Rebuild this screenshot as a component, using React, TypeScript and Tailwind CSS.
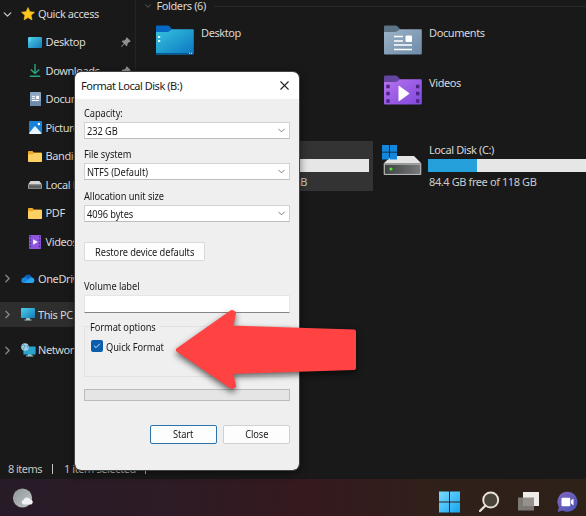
import type { ReactNode } from "react";
import clsx from "clsx";
import { Check, ChevronDown, ChevronRight, X } from "lucide-react";

/* ---------- small icons ---------- */

function StarIcon() {
  return (
    <svg width="14" height="14" viewBox="0 0 14 14">
      <path d="M7 .5l1.9 4.2 4.6.5-3.4 3.1.9 4.6L7 10.6l-4 2.3.9-4.6L.5 5.2l4.6-.5z" fill="#ffc61c" stroke="#ffc61c" strokeWidth=".6" strokeLinejoin="round" />
    </svg>
  );
}

function DesktopIcon() {
  return (
    <svg width="14" height="11" viewBox="0 0 14 11">
      <defs>
        <linearGradient id="desk" x1="0" y1="0" x2="1" y2="1">
          <stop offset="0" stopColor="#4fd0ea" />
          <stop offset="1" stopColor="#1479b8" />
        </linearGradient>
      </defs>
      <rect width="14" height="11" rx=".8" fill="url(#desk)" />
      <path d="M1.5 2h1M1.5 4h1" stroke="#c9f3fb" strokeWidth=".8" />
    </svg>
  );
}

function DownloadIcon() {
  return (
    <svg width="12" height="13" viewBox="0 0 12 13" fill="none" stroke="#27a57b" strokeWidth="1.4">
      <path d="M6 0v9.5M1.8 5.6L6 9.6l4.2-4M.8 12.2h10.4" />
    </svg>
  );
}

function DocumentIcon() {
  return (
    <svg width="11" height="14" viewBox="0 0 11 14">
      <rect width="11" height="14" rx=".8" fill="#8ba6c1" />
      <path d="M0 9h11v4.2a.8.8 0 0 1-.8.8H.8a.8.8 0 0 1-.8-.8z" fill="#6e8aaa" />
      <path d="M2 4.4h3M2 6.4h3M2 8.6h7" stroke="#fff" strokeWidth="1" />
      <rect x="6.2" y="3.8" width="2.8" height="3.2" fill="#fff" />
    </svg>
  );
}

function PictureIcon() {
  return (
    <svg width="13" height="13" viewBox="0 0 13 13">
      <rect width="13" height="13" rx="1" fill="#1683d8" />
      <path d="M0 12.2L5.500 5.600a.7.7 0 0 1 1 0l6 6.600c-.2.5-.4.8-1 .8H1c-.5 0-.8-.3-1-.8z" fill="#e9f5fd" />
      <circle cx="9.900" cy="3" r="1.200" fill="#fff" />
    </svg>
  );
}

function FolderIcon() {
  return (
    <svg width="14" height="11" viewBox="0 0 14 11">
      <path d="M0 1a.9.9 0 0 1 .9-1h3.600l1.400 1.500h7.200a.9.9 0 0 1 .9.9V5H0z" fill="#eda927" />
      <path d="M0 3.200h4.800l1.300-1.100h7a.9.9 0 0 1 .9.9v7.100a.9.9 0 0 1-.9.9H.9a.9.9 0 0 1-.9-.9z" fill="#fdd063" />
    </svg>
  );
}

function DiskIcon() {
  return (
    <svg width="14" height="8" viewBox="0 0 14 8">
      <path d="M2.600 0h8.800L14 3.600H0z" fill="#d5d5d5" />
      <rect y="3.400" width="14" height="4.400" rx=".5" fill="#a2a2a2" />
      <rect x=".9" y="4.300" width="12.200" height="2.600" fill="#595b5b" />
    </svg>
  );
}

function VideoIcon() {
  return (
    <svg width="12" height="14" viewBox="0 0 12 14">
      <rect width="12" height="14" rx=".8" fill="#8e56db" />
      <path d="M1.400 1v12M10.600 1v12" stroke="#4c2a9b" strokeWidth="1.400" strokeDasharray="1.6 1.6" />
      <path d="M4.200 4.200v5.600L8.800 7z" fill="#fff" />
    </svg>
  );
}

function OneDriveIcon() {
  return (
    <svg width="14" height="9" viewBox="0 0 14 9">
      <path d="M3 4A4 4 0 0 1 10.400 2.600L12 5.500 5 7z" fill="#0b62b9" />
      <path d="M2.800 9A2.800 2.800 0 0 1 3.300 3.400 3.600 3.600 0 0 1 6 4l5 4.600z" fill="#1685dc" />
      <path d="M3 9l5-4.300a3.400 3.400 0 0 1 3-1.200A2.800 2.800 0 0 1 11.300 9z" fill="#2aa4ee" />
    </svg>
  );
}

function PcIcon() {
  return (
    <svg width="14" height="13" viewBox="0 0 14 13">
      <path d="M5.500 9h3l.5 2.600H5zM3.500 11.400h7v1h-7z" fill="#9fc4d4" />
      <rect width="14" height="10" rx=".8" fill="url(#desk)" />
    </svg>
  );
}

function NetworkIcon() {
  return (
    <svg width="15" height="14" viewBox="0 0 15 14" className="shrink-0">
      <path d="M7 11h3.400l.4 2H6.600zM5 12.600h7.400v1H5z" fill="#9fc4d4" />
      <rect x="2.400" y="3.600" width="12.200" height="8" rx=".7" fill="#2ba3cf" />
      <circle cx="4" cy="4" r="3.800" fill="#a5d3e6" />
      <path d="M1.200 2.600l1.800-.8 1.200 1.200L3 4.400 2.600 6.600M5.800 2l1 1.600-1 1.600" fill="none" stroke="#3d8cb4" strokeWidth=".9" />
    </svg>
  );
}

function PinIcon() {
  return (
    <svg width="10" height="10" viewBox="0 0 10 10">
      <path d="M5.800.2l4 4-1 .8-.6-.1-1.600 1.700-.2 1.900-.9.7-2.100-2.100L.7 9.900.1 9.300l2.800-2.700L.8 4.500l.7-.9 1.900-.2L5.100 1.800 5 1.200z" fill="#8f9193" />
    </svg>
  );
}

/* ---------- large icons ---------- */

function BigFolder({ kind }: { kind: "desktop" | "documents" | "videos" }) {
  const fills = {
    desktop: ["#0569c4", "#36c3e0", "#0c76c0"],
    documents: ["#5c7486", "#9db4c9", "#6d8aa6"],
    videos: ["#65449f", "#b671ee", "#8048dc"],
  }[kind];
  return (
    <svg width="38" height="30" viewBox="0 0 38 30" className="shrink-0">
      <defs>
        <linearGradient id={kind} x1="0" y1="0" x2="1" y2="1">
          <stop offset="0" stopColor={fills[1]} />
          <stop offset="1" stopColor={fills[2]} />
        </linearGradient>
      </defs>
      <path d="M0 1.500Q0 .5 1 .5h10.500q1 0 1.800.7L16.500 4.500V12H0z" fill={fills[0]} />
      <path d="M0 7h11.500q1 0 1.800-.7L15 5q.8-.7 1.800-.7H36.800q1 0 1 1V28.500q0 1-1 1H1q-1 0-1-1z" fill={`url(#${kind})`} />
      {kind === "desktop" && (
        <>
          <path d="M0 28h37.800v.5q0 1-1 1H1q-1 0-1-1z" fill="#075a96" />
          <path d="M2 12h2.200M2 16h2.200" stroke="#e2fbff" strokeWidth="2" />
          <path d="M33 28.300h1.200M35 28.300h1.200" stroke="#d5f2fa" strokeWidth="1" />
        </>
      )}
      {kind === "documents" && (
        <>
          <path d="M10 11.500h9M10 16h9M10 20h18M10 24.500h18" stroke="#fff" strokeWidth="1.500" />
          <rect x="21.500" y="10.500" width="6.500" height="6.500" rx="1" fill="#fff" />
        </>
      )}
      {kind === "videos" && (
        <>
          <path d="M2.300 11.500h3.400M2.300 18.500h3.400M2.300 26h3.400M32 11.500h3.400M32 18.500h3.400M32 26h3.400" stroke="#4b2585" strokeWidth="3.600" />
          <path d="M14.500 11.500q0-1 .9-.5l9.600 7q.7.500 0 1l-9.600 7q-.9.500-.9-.500z" fill="#fff" />
        </>
      )}
    </svg>
  );
}

function SystemDriveIcon() {
  return (
    <svg width="40" height="32" viewBox="0 0 40 32">
      <defs>
        <linearGradient id="drive" x1="0" y1="0" x2="1" y2="0">
          <stop offset="0" stopColor="#3d4242" />
          <stop offset="1" stopColor="#77797a" />
        </linearGradient>
      </defs>
      <path d="M9.500 12h22.500l7.500 7.500H1.500z" fill="#e4e4e4" />
      <rect x="1.700" y="19.500" width="37.600" height="11.500" rx=".8" fill="#b4b5b5" />
      <rect x="2.900" y="20.700" width="35.200" height="9.200" fill="url(#drive)" />
      <circle cx="9" cy="25" r="1.600" fill="#4ee62d" />
      <path d="M0 1h7.100v6.800H0zM7.900 1H15v6.800H7.900zM0 8.600h7.100v6.800H0zM7.900 8.600H15v6.800H7.900z" fill="#1387dc" />
    </svg>
  );
}

/* ---------- explorer ---------- */

function NavItem({ icon, label, pinned }: { icon: ReactNode; label: string; pinned?: boolean }) {
  return (
    <div className="flex h-[28.5px] items-center pl-7">
      <span className="flex w-[14px] shrink-0 justify-center">{icon}</span>
      <span className="ml-[3.5px] flex-1">{label}</span>
      {pinned && <span className="mr-1"><PinIcon /></span>}
    </div>
  );
}

function RootItem({ icon, label, active }: { icon: ReactNode; label: string; active?: boolean }) {
  return (
    <div className={clsx("flex h-[25.5px] items-center", active && "bg-[#2e2e2e]")}>
      <ChevronRight className="ml-[1px] size-[13px] shrink-0 text-[#858585]" strokeWidth={2.5} />
      <span className="ml-[7px] flex w-[14px] shrink-0 justify-center">{icon}</span>
      <span className="ml-[3px]">{label}</span>
    </div>
  );
}

function Sidebar() {
  return (
    <nav className="w-[136px] shrink-0 overflow-hidden border-r border-[#242424]">
      <div className="flex h-[28px] items-center">
        <ChevronDown className="ml-[1px] size-[13px] text-[#c4c4c4]" strokeWidth={2.5} />
        <span className="ml-[7px]"><StarIcon /></span>
        <span className="ml-[3px]">Quick access</span>
      </div>
      <NavItem icon={<DesktopIcon />} label="Desktop" pinned />
      <NavItem icon={<DownloadIcon />} label="Downloads" pinned />
      <NavItem icon={<DocumentIcon />} label="Documents" />
      <NavItem icon={<PictureIcon />} label="Pictures" />
      <NavItem icon={<FolderIcon />} label="Bandicam" />
      <NavItem icon={<DiskIcon />} label="Local Disk" />
      <NavItem icon={<FolderIcon />} label="PDF" />
      <NavItem icon={<VideoIcon />} label="Videos" />
      <div className="flex flex-col gap-[10.3px] pt-[10px]">
        <RootItem icon={<OneDriveIcon />} label="OneDrive" />
        <RootItem icon={<PcIcon />} label="This PC" active />
        <RootItem icon={<NetworkIcon />} label="Network" />
      </div>
    </nav>
  );
}

function FolderTile({ kind, label }: { kind: "desktop" | "documents" | "videos"; label: string }) {
  return (
    <div className="flex h-[50px] pt-[10px]">
      <BigFolder kind={kind} />
      <span className="ml-[7px]">{label}</span>
    </div>
  );
}

function Content() {
  return (
    <main className="min-w-0 flex-1">
      <div className="flex h-[15px] items-center pb-[3px] pl-[7px] leading-[12px]">
        <ChevronDown className="size-[10px] text-[#6d6d6d]" strokeWidth={2} />
        <span className="ml-[3.5px] pr-px">Folders (6)</span>
        <span className="ml-[7px] h-px flex-1 bg-[#292a2c]" />
      </div>
      <div className="grid grid-cols-[228px_228px] pl-5">
        <FolderTile kind="desktop" label="Desktop" />
        <FolderTile kind="documents" label="Documents" />
        <div />
        <FolderTile kind="videos" label="Videos" />
      </div>
      <div className="mt-[26px] flex h-[50px]">
        <div className="flex w-[237px] flex-col bg-[#333333] pr-1 pt-[18px]">
          <div className="h-[13px] bg-[#e6e6e6]" />
          <span className="mt-[2px] pr-[62px] text-right text-[#c8c8c8]">931 GB free of 932 GB</span>
        </div>
        <div className="ml-[9px] mt-[3px]"><SystemDriveIcon /></div>
        <div className="ml-[6px] flex-1">
          <div className="flex h-[18px] items-center pl-[1px]">Local Disk (C:)</div>
          <div className="h-[13px] bg-[#e6e6e6]">
            <div className="h-full w-[49px] bg-[#26a0da]" />
          </div>
          <div className="mt-[2px] pl-[1px] text-[#cccccc]">84.4 GB free of 118 GB</div>
        </div>
      </div>
    </main>
  );
}

/* ---------- dialog ---------- */

/* Condensed dialog lettering */
function Label({ children, center }: { children: ReactNode; center?: boolean }) {
  return (
    <span className={clsx("inline-block scale-x-[0.845]", center ? "origin-center" : "origin-left")}>
      {children}
    </span>
  );
}

function SelectField({ label, value }: { label: string; value: string }) {
  return (
    <div className="h-[41.3px]">
      <div className="h-[17px]"><Label>{label}</Label></div>
      <div className="flex h-[17px] items-center justify-between border border-[#d2d2d2] border-b-[#bdbdbd] bg-white pl-[2px] pr-[2px]">
        <Label>{value}</Label>
        <ChevronDown className="size-[11px] text-[#666]" strokeWidth={1.8} />
      </div>
    </div>
  );
}

function FormatDialog() {
  return (
    <div className="absolute left-[75px] top-[72px] flex h-[398px] w-[224px] flex-col overflow-hidden rounded-[6px] bg-[#efefef] text-[11px] leading-[15px] tracking-[-0.1px] text-[#1b1b1b] shadow-[0_2px_10px_rgba(0,0,0,0.6)] outline outline-[#444]">
      <div className="flex h-[27px] shrink-0 items-center justify-between bg-white pl-[6px] pr-[7px]">
        <span className="tracking-[-0.47px]">Format Local Disk (B:)</span>
        <X className="size-[15px] text-[#222]" strokeWidth={1.7} />
      </div>
      <div className="flex flex-1 flex-col px-[9px] pt-[6px]">
        <SelectField label="Capacity:" value="232 GB" />
        <SelectField label="File system" value="NTFS (Default)" />
        <SelectField label="Allocation unit size" value="4096 bytes" />
        <button className="mt-[13px] flex h-[19px] w-[121px] shrink-0 items-center justify-center rounded-[1px] border border-[#dadada] bg-[#fdfdfd]">
          <Label center>Restore device defaults</Label>
        </button>
        <div className="mt-[17px]"><Label>Volume label</Label></div>
        <div className="mt-[2px] h-[18px] shrink-0 border border-[#e6e6e6] border-b-[#868686] bg-white" />
        <fieldset className="mt-[6px] h-[58px] shrink-0 border border-[#e2e2e2] px-[6px]">
          <legend className="-ml-[1.5px] w-[70px]"><Label>Format options</Label></legend>
          <div className="mt-[5px] flex items-center">
            <span className="flex size-[12px] items-center justify-center rounded-[2px] bg-[#0a5cad]">
              <Check className="size-[8px] text-white" strokeWidth={2.5} />
            </span>
            <span className="ml-[2.5px]"><Label>Quick Format</Label></span>
          </div>
        </fieldset>
        <div className="mt-[12px] h-[12px] shrink-0 border border-[#bcbcbc] bg-[#e5e5e5]" />
        <div className="mt-[24px] flex justify-end gap-[6px]">
          <button className="h-[19px] w-[67px] rounded-[2px] border border-[#2a73ad] bg-[#fdfdfd] leading-[16px]"><Label center>Start</Label></button>
          <button className="h-[19px] w-[67px] rounded-[2px] border border-[#d0d0d0] bg-[#fdfdfd] leading-[16px]"><Label center>Close</Label></button>
        </div>
      </div>
    </div>
  );
}

/* Callout arrow pointing at the Quick Format box */
function Arrow() {
  return (
    <svg width="200" height="100" viewBox="0 0 200 100" className="absolute left-[166px] top-[300px] drop-shadow-[0_3px_3px_rgba(0,0,0,0.6)]">
      <path d="M12 50L66 12l2 1-3 14.500L188 31.500v36.500L65 72l3 14-2 1z" fill="#ff4242" stroke="#ff4242" strokeWidth="4" strokeLinejoin="round" />
    </svg>
  );
}

/* ---------- taskbar ---------- */

function Taskbar() {
  return (
    <footer className="flex h-[37px] shrink-0 items-center bg-[linear-gradient(90deg,#271b28_0%,#2d1b25_28%,#35191e_52%,#30201a_75%,#2d2118_100%)] pt-[8px]">
      <svg width="22" height="22" viewBox="0 0 22 22" className="-mt-[8px] ml-[12px]">
        <defs>
          <linearGradient id="moon" x1="0" y1="0" x2="1" y2="1">
            <stop offset="0" stopColor="#8d9597" />
            <stop offset="1" stopColor="#c2c7c9" />
          </linearGradient>
        </defs>
        <circle cx="10.500" cy="11" r="9.600" fill="url(#moon)" />
        <path d="M11.500 17.500a2.300 2.300 0 0 1 0-4.500 3.700 3.700 0 0 1 6.700-.5 2.600 2.600 0 0 1 1 5z" fill="#f1f1f5" />
      </svg>
      <svg width="22" height="22" viewBox="0 0 22 22" className="ml-[405px]">
        <defs>
          <linearGradient id="win" x1="0" y1="0" x2="1" y2="1">
            <stop offset="0" stopColor="#7bdcff" />
            <stop offset="1" stopColor="#14a5ef" />
          </linearGradient>
        </defs>
        <path d="M0 .5h10v10H0zM11 .5h10v10H11zM0 11.500h10v10H0zM11 11.500h10v10H11z" fill="url(#win)" />
      </svg>
      <svg width="21" height="22" viewBox="0 0 21 22" className="ml-[18px]">
        <path d="M7 14l-6 6" stroke="#e3ddd6" strokeWidth="2.400" strokeLinecap="round" />
        <circle cx="11.700" cy="9" r="7.500" fill="#4b443d" stroke="#e8e3dd" strokeWidth="1.900" />
      </svg>
      <svg width="22" height="21" viewBox="0 0 22 21" className="ml-[18px]">
        <rect x="5" y="1" width="16" height="14" fill="#efebe8" />
        <rect x="0" y="6.500" width="16" height="13" fill="#888480" fillOpacity=".88" />
      </svg>
      <svg width="21" height="22" viewBox="0 0 21 22" className="ml-[17px]">
        <defs>
          <linearGradient id="chat" x1="0" y1="0" x2="1" y2="1">
            <stop offset="0" stopColor="#8467bd" />
            <stop offset="1" stopColor="#4952b8" />
          </linearGradient>
        </defs>
        <path d="M10.500.8a10 10 0 1 1-5 18.700L.7 21l1.200-5A10 10 0 0 1 10.500.8z" fill="url(#chat)" />
        <rect x="4.500" y="6.700" width="8.800" height="8.600" rx="1" fill="#fff" />
        <path d="M14 9.500L16.500 7.500v7L14 12.500z" fill="#fff" />
      </svg>
    </footer>
  );
}

export default function App() {
  return (
    <div className="relative flex h-[516px] w-[586px] flex-col overflow-hidden bg-[#191919] font-['Noto_Sans',sans-serif] text-[11px] leading-[16px] tracking-[-0.4px] whitespace-nowrap text-[#d8d8d8]">
      <div className="flex h-[459px] shrink-0 overflow-hidden">
        <Sidebar />
        <Content />
      </div>
      <div className="flex h-[20px] shrink-0 items-center pb-px pl-2 text-[#c4c4c4]">
        <span className="tracking-[-0.55px]">8 items</span>
        <span className="ml-[10px] h-[10px] w-px bg-[#c4c4c4]" />
        <span className="ml-[11px]">1 item selected</span>
        <span className="ml-[9px] h-[10px] w-px bg-[#c4c4c4]" />
      </div>
      <Taskbar />
      <FormatDialog />
      <Arrow />
    </div>
  );
}
